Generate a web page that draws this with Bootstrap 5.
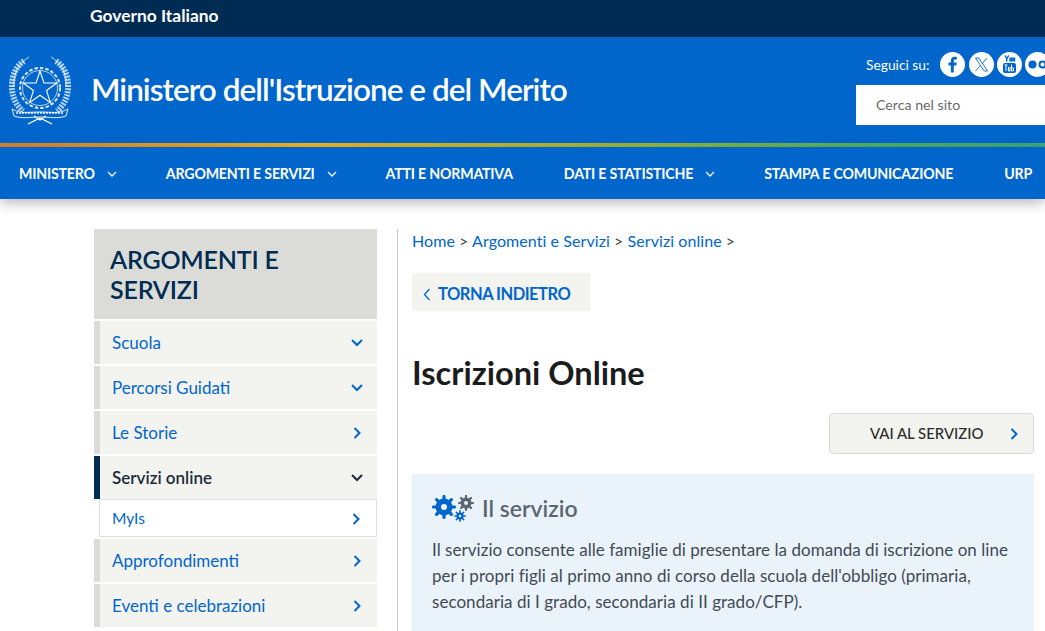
<!DOCTYPE html>
<html lang="it">
<head>
  <meta charset="UTF-8" />
  <meta name="viewport" content="width=device-width, initial-scale=1.0"/>
  <title>Iscrizioni Online - Ministero dell'Istruzione e del Merito</title>
  <link href="https://cdn.jsdelivr.net/npm/bootstrap@5.3.3/dist/css/bootstrap.min.css" rel="stylesheet">
  <style>
    html, body { height: 631px; overflow: hidden; }
    body { font-family: Lato, "Noto Sans", sans-serif; background: #fff; color: #1c1c1c; width: 1045px; }

    .gov-bar { height: 37px; background: #002b52; color: #fff; padding-left: 90px; font-size: 17.4px; font-weight: 700; }
    .site-head { height: 106px; background: #0066cc; color: #fff; }
    .emblem { width: 62px; height: 70px; margin-left: 9px; margin-right: 20px; }
    .site-name { font-size: 31.500px; font-weight: 600; letter-spacing: -.96px; margin: 0; line-height: 1; padding-bottom: 1px; white-space: nowrap; }
    .head-right { width: 189px; margin-left: auto; }
    .social-row { height: 29px; margin-top: 13px; margin-bottom: 6px; font-size: 13.8px; padding-left: 10px; gap: 11px; white-space: nowrap; }
    .social-row span { padding-top: 2px; }
    .social-row .icons { gap: 3.300px; }
    .soc { width: 25px; height: 25px; border-radius: 50%; background: #fff; flex: none; }
    .search-box { height: 40px; background: #fff; color: #6a6a6a; font-size: 14.2px; padding-left: 20px; }
    .rainbow { height: 4px; background: linear-gradient(to right, #d9822b 0, #f2b71f 30%, #8cb73a 65%, #4caf62 85%, #3fa878 100%); }
    .main-nav { height: 52px; background: #0066cc; padding-left: 19px; padding-top: 2px; box-shadow: 0 4px 12px rgba(0,0,0,.28); position: relative; white-space: nowrap; }
    .nav-entry { color: #fff; font-size: 14.2px; font-weight: 700; text-decoration: none; letter-spacing: -.2px; }
    .nav-entry svg { margin-left: 12px; vertical-align: 2px; }
    .main-nav .nav-entry { margin-right: 51px; }
    .main-nav .has-caret { margin-right: 49px; }

    .page-body { padding-top: 30px; padding-left: 94px; padding-right: 11px; }
    .side-col { width: 283px; flex: none; }
    .side-title { height: 90px; background: #dbdcd7; color: #002b52; font-size: 25px; font-weight: 600; letter-spacing: -.2px; line-height: 30px; padding: 15px 16px 0; margin-bottom: 2px; }
    .side-item { height: 43px; margin-bottom: 2px; background: #f3f4ef; border-left: 6px solid #dbdcd7; padding-left: 12px; padding-right: 14px; color: #0066cc; font-size: 17px; text-decoration: none; }
    .side-item.current { border-left-color: #002b52; color: #1c2b3a; font-weight: 600; margin-bottom: 0; }
    .side-sub { height: 38px; margin-left: 5px; margin-bottom: 2px; background: #fff; border: 1px solid #e0e0e0; padding-left: 12px; padding-right: 14px; padding-top: 2px; color: #0066cc; font-size: 15.5px; text-decoration: none; }

    .content-col { margin-left: 20px; border-left: 1px solid #c8c8c8; padding-left: 14px; flex: 1; height: 402px; }
    .crumbs { font-size: 16px; letter-spacing: .07px; line-height: 24px; margin-bottom: 20px; color: #444; }
    .crumbs a { color: #0066cc; text-decoration: none; }
    .back-link { display: inline-flex; align-items: center; width: 178px; height: 38px; background: #f3f4ef; color: #0066cc; font-size: 16.500px; font-weight: 700; letter-spacing: -.5px; padding-left: 11px; padding-top: 4px; gap: 7px; text-decoration: none; }
    .page-h { font-size: 32.600px; font-weight: 700; line-height: 37px; margin: 43px 0 22px; color: #1c1c1c; }
    .go-btn { width: 205px; height: 41px; background: #f3f4ef; border: 1px solid #dbdcd7; border-radius: 4px; color: #2b2b2b; font-size: 14.900px; font-weight: 500; padding: 0 14px 0 40px; text-decoration: none; }
    .info-box { background: #ebf3fa; margin-top: 20px; padding: 16px 20px 0; height: 157px; }
    .info-h { font-size: 23px; font-weight: 600; color: #5a6772; gap: 5px; margin-bottom: 10px; line-height: 37px; }
    .info-text { font-size: 17px; letter-spacing: .04px; line-height: 26px; color: #3f4a54; margin: 0; }
  </style>
</head>
<body>

  <div class="gov-bar d-flex align-items-center pb-1">Governo Italiano</div>

  <header class="site-head d-flex">
    <div class="d-flex align-items-center flex-grow-1">
      <svg class="emblem" viewBox="0 0 62 70" fill="none" stroke="#fff">
        <path d="M15 6C6 12 2 23 3 35c1 9 5 16 11 21M47 6c9 6 13 17 12 29-1 9-5 16-11 21" stroke-width="6" stroke-dasharray="2 1.100" opacity=".7"/>
        <path d="M20 2c-10 6-16 16-15 30M42 2c10 6 16 16 15 30" stroke-width=".8"/>
        <circle cx="31" cy="33" r="20" stroke-width="2" stroke-dasharray="3.500 2" opacity=".85"/>
        <circle cx="31" cy="33" r="17.500" stroke-width=".7"/>
        <path d="M31 16l4 12h12.800l-10.300 7.500 3.900 12.200L31 40.300l-10.400 7.400 3.900-12.200L14.200 28H27z" stroke-width="1.100" fill="#0066cc"/>
        <path d="M3 54c9 5 15 3 28 3s19 2 28-3l-2 7c-8 3-16 1-26 1s-18 2-26-1z" stroke-width=".9" fill="#0066cc"/>
        <path d="M7 58h48" stroke-width="2" stroke-dasharray="2 1" opacity=".7"/>
        <path d="M19 69l12-6 12 6M25 61l6 4 6-4" stroke-width="1.300"/>
      </svg>
      <h1 class="site-name">Ministero dell'Istruzione e del Merito</h1>
    </div>
    <div class="head-right">
      <div class="social-row d-flex align-items-center">
        <span>Seguici su:</span>
        <div class="icons d-flex">
          <svg class="soc" viewBox="0 0 25 25"><path fill="#0066cc" d="M13.800 20.500v-7h2.500l.4-2.900h-2.900V8.900c0-.8.3-1.400 1.500-1.400h1.500V4.900c-.4 0-1.200-.1-2.200-.1-2.200 0-3.700 1.300-3.700 3.800v2H8.500v2.900h2.400v7z"/></svg>
          <svg class="soc" viewBox="0 0 25 25"><path fill="none" stroke="#0066cc" stroke-width=".9" d="M6.500 6h3.300l8.700 13h-3.300zM18 6l-4.800 5.600M11.300 13.700L6.500 19"/></svg>
          <svg class="soc" viewBox="0 0 25 25"><rect x="6" y="11" width="13" height="10" rx="2" fill="#0066cc"/><path stroke="#0066cc" stroke-width="1.400" fill="none" d="M8 3.500l1.800 3.200v2.800M11.700 3.500L9.800 6.700M13 5.500v3.200h1.500V5.500M16 5.500v3.200h1.500V5.500"/><path stroke="#fff" stroke-width="1" fill="none" d="M7.500 13h3M9 13v6M11.500 15v4h1.500v-4M14.500 12.500V19h2v-3h-2"/></svg>
          <svg class="soc" viewBox="0 0 25 25"><circle cx="7.500" cy="12.500" r="4" fill="#0066cc"/><circle cx="17.500" cy="12.500" r="3" fill="none" stroke="#0066cc" stroke-width="2"/></svg>
        </div>
      </div>
      <div class="search-box d-flex align-items-center">Cerca nel sito</div>
    </div>
  </header>

  <div class="rainbow"></div>

  <nav class="main-nav d-flex align-items-center">
    <a class="nav-entry has-caret" href="#">MINISTERO<svg width="10" height="6" viewBox="0 0 10 6" fill="none" stroke="#fff" stroke-width="1.300"><path d="M1 1l4 4 4-4"/></svg></a>
    <a class="nav-entry has-caret" href="#">ARGOMENTI E SERVIZI<svg width="10" height="6" viewBox="0 0 10 6" fill="none" stroke="#fff" stroke-width="1.300"><path d="M1 1l4 4 4-4"/></svg></a>
    <a class="nav-entry" href="#">ATTI E NORMATIVA</a>
    <a class="nav-entry has-caret" href="#">DATI E STATISTICHE<svg width="10" height="6" viewBox="0 0 10 6" fill="none" stroke="#fff" stroke-width="1.300"><path d="M1 1l4 4 4-4"/></svg></a>
    <a class="nav-entry" href="#">STAMPA E COMUNICAZIONE</a>
    <a class="nav-entry" href="#">URP</a>
  </nav>

  <div class="page-body d-flex">
    <aside class="side-col">
      <div class="side-title">ARGOMENTI E SERVIZI</div>
      <a class="side-item d-flex align-items-center justify-content-between" href="#">Scuola<svg width="12" height="8" viewBox="0 0 12 8" fill="none" stroke="#0066cc" stroke-width="2"><path d="M1 1l5 5 5-5"/></svg></a>
      <a class="side-item d-flex align-items-center justify-content-between" href="#">Percorsi Guidati<svg width="12" height="8" viewBox="0 0 12 8" fill="none" stroke="#0066cc" stroke-width="2"><path d="M1 1l5 5 5-5"/></svg></a>
      <a class="side-item d-flex align-items-center justify-content-between" href="#">Le Storie<svg width="12" height="12" viewBox="0 0 12 12" fill="none" stroke="#0066cc" stroke-width="2"><path d="M3.500 1l5 5-5 5"/></svg></a>
      <a class="side-item current d-flex align-items-center justify-content-between" href="#">Servizi online<svg width="12" height="8" viewBox="0 0 12 8" fill="none" stroke="#1c2b3a" stroke-width="2"><path d="M1 1l5 5 5-5"/></svg></a>
      <a class="side-sub d-flex align-items-center justify-content-between" href="#">MyIs<svg width="12" height="12" viewBox="0 0 12 12" fill="none" stroke="#0066cc" stroke-width="2"><path d="M3.500 1l5 5-5 5"/></svg></a>
      <a class="side-item d-flex align-items-center justify-content-between" href="#">Approfondimenti<svg width="12" height="12" viewBox="0 0 12 12" fill="none" stroke="#0066cc" stroke-width="2"><path d="M3.500 1l5 5-5 5"/></svg></a>
      <a class="side-item d-flex align-items-center justify-content-between" href="#">Eventi e celebrazioni<svg width="12" height="12" viewBox="0 0 12 12" fill="none" stroke="#0066cc" stroke-width="2"><path d="M3.500 1l5 5-5 5"/></svg></a>
    </aside>

    <main class="content-col">
      <div class="crumbs"><a href="#">Home</a> &gt; <a href="#">Argomenti e Servizi</a> &gt; <a href="#">Servizi online</a> &gt;</div>
      <a class="back-link" href="#"><svg width="8" height="13" viewBox="0 0 8 13" fill="none" stroke="#0066cc" stroke-width="1.300"><path d="M6.500 1L1.500 6.500l5 5.500"/></svg>TORNA INDIETRO</a>
      <h2 class="page-h">Iscrizioni Online</h2>
      <div class="d-flex justify-content-end">
        <a class="go-btn d-flex align-items-center justify-content-between" href="#">VAI AL SERVIZIO<svg width="10" height="12" viewBox="0 0 10 12" fill="none" stroke="#0066cc" stroke-width="2"><path d="M2.500 1l5 5-5 5"/></svg></a>
      </div>
      <section class="info-box">
        <div class="info-h d-flex align-items-center">
          <svg width="45" height="27" viewBox="0 0 45 27">
            <g fill="#0066cc">
              <circle cx="12" cy="12" r="8.500"/>
              <path stroke="#0066cc" stroke-width="3.200" stroke-linecap="round" d="M12 1.500v21M1.500 12h21M4.600 4.600l14.800 14.800M19.400 4.600L4.600 19.400"/>
              <circle cx="28" cy="21" r="3.600"/>
              <path stroke="#0066cc" stroke-width="1.600" stroke-linecap="round" d="M28 15.800v10.400M22.800 21h10.400M24.300 17.300l7.400 7.400M31.700 17.300l-7.400 7.400"/>
            </g>
            <circle cx="12" cy="12" r="3" fill="#ebf3fa"/>
            <circle cx="28" cy="21" r="1.300" fill="#ebf3fa"/>
            <g fill="#5a6772">
              <circle cx="34" cy="8" r="5.500"/>
              <path stroke="#5a6772" stroke-width="2.200" stroke-linecap="round" d="M34 1v14M27 8h14M29 3l10 10M39 3L29 13"/>
            </g>
            <circle cx="34" cy="8" r="2" fill="#ebf3fa"/>
          </svg>
          <span>Il servizio</span>
        </div>
        <p class="info-text">Il servizio consente alle famiglie di presentare la domanda di iscrizione on line per i propri figli al primo anno di corso della scuola dell'obbligo (primaria, secondaria di I grado, secondaria di II grado/CFP).</p>
      </section>
    </main>
  </div>

  <script src="https://cdn.jsdelivr.net/npm/bootstrap@5.3.3/dist/js/bootstrap.bundle.min.js"></script>
</body>
</html>
